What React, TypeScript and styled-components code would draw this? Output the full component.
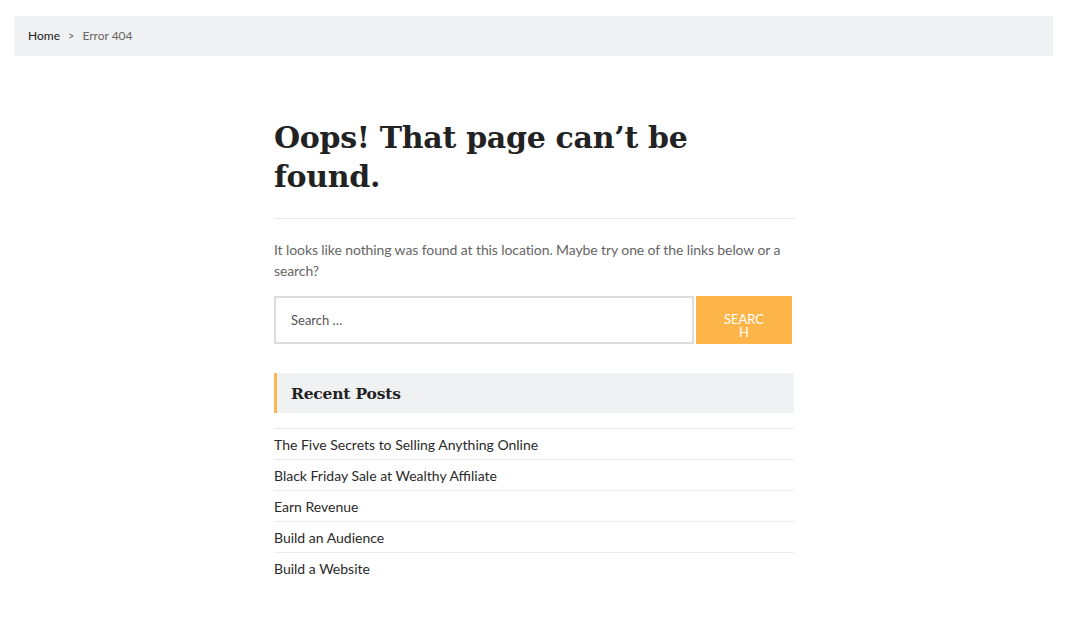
import styled, { createGlobalStyle } from 'styled-components';

const GlobalStyle = createGlobalStyle`
  body {
    margin: 0;
    background: #ffffff;
    font-family: Lato, "Liberation Sans", sans-serif;
    color: #333333;
  }
  * { box-sizing: border-box; }
`;

const Page = styled.div`
  width: 1068px;
  padding-top: 16px;
`;

const Breadcrumb = styled.nav`
  margin: 0 15px 0 14px;
  height: 40px;
  background: #f0f1f2;
  display: flex;
  align-items: center;
  gap: 8px;
  padding: 0 0 2px 14px;
  font-size: 12px;
`;

const Crumb = styled.span<{ $current?: boolean }>`
  color: ${p => (p.$current ? '#666666' : '#222222')};
`;

const Sep = styled.span`
  color: #666666;
  font-size: 11px;
`;

const Main = styled.main`
  width: 520px;
  margin: 0 auto;
  padding-top: 62px;
`;

const Title = styled.h1`
  margin: 0;
  font-family: "DejaVu Serif", "Liberation Serif", serif;
  font-weight: 700;
  font-size: 30px;
  line-height: 39px;
  color: #222222;
  padding-bottom: 22px;
  border-bottom: 1px solid #e9e9e9;
  letter-spacing: -0.3px;
`;

const Intro = styled.p`
  margin: 20px 0 0;
  font-size: 14px;
  line-height: 21px;
  letter-spacing: -0.1px;
  color: #666666;
`;

const SearchForm = styled.form`
  display: flex;
  gap: 2px;
  margin-top: 15px;
  width: 518px;
`;

const SearchInput = styled.input`
  flex: 1;
  height: 48px;
  border: 2px solid #dcdcdc;
  padding: 0 15px;
  font-family: Lato, "Liberation Sans", sans-serif;
  font-size: 13px;
  color: #555555;
  outline: none;
  &::placeholder { color: #555555; }
`;

const SearchButton = styled.button`
  width: 96px;
  height: 48px;
  border: 0;
  background: #fdb549;
  color: #ffffff;
  font-family: Lato, "Liberation Sans", sans-serif;
  font-size: 13px;
  line-height: 13px;
  padding: 12px 24px 0;
  text-transform: uppercase;
  word-break: break-all;
`;

const Widget = styled.section`
  margin-top: 29px;
`;

const WidgetTitle = styled.h2`
  margin: 0;
  height: 40px;
  display: flex;
  align-items: center;
  padding-left: 14px;
  background: #f0f1f2;
  border-left: 3px solid #f8b84e;
  font-family: "DejaVu Serif", "Liberation Serif", serif;
  font-weight: 700;
  font-size: 15.5px;
  letter-spacing: -0.2px;
  color: #222222;
`;

const PostList = styled.ul`
  list-style: none;
  margin: 15px 0 0;
  padding: 0;
`;

const PostItem = styled.li`
  border-top: 1px solid #ececec;
  height: 31px;
  display: flex;
  align-items: center;
  font-size: 14px;
  color: #2a2a2a;
`;

const posts = [
  'The Five Secrets to Selling Anything Online',
  'Black Friday Sale at Wealthy Affiliate',
  'Earn Revenue',
  'Build an Audience',
  'Build a Website',
];

export default function App() {
  return (
    <Page>
      <GlobalStyle />
      <Breadcrumb>
        <Crumb>Home</Crumb>
        <Sep>&gt;</Sep>
        <Crumb $current>Error 404</Crumb>
      </Breadcrumb>
      <Main>
        <Title>Oops! That page can’t be found.</Title>
        <Intro>
          It looks like nothing was found at this location. Maybe try one of the links below or a search?
        </Intro>
        <SearchForm onSubmit={e => e.preventDefault()}>
          <SearchInput placeholder="Search …" />
          <SearchButton type="submit">Search</SearchButton>
        </SearchForm>
        <Widget>
          <WidgetTitle>Recent Posts</WidgetTitle>
          <PostList>
            {posts.map(p => (
              <PostItem key={p}>{p}</PostItem>
            ))}
          </PostList>
        </Widget>
      </Main>
    </Page>
  );
}
